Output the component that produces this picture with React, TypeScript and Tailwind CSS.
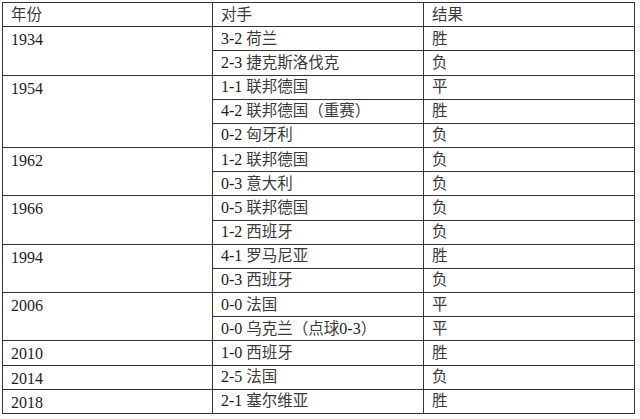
import React from 'react'

interface Match {
  score: string
  opponent: string
  result: string
}

interface YearGroup {
  year: string
  matches: Match[]
}

const groups: YearGroup[] = [
  {
    year: '1934',
    matches: [
      { score: '3-2', opponent: '荷兰', result: '胜' },
      { score: '2-3', opponent: '捷克斯洛伐克', result: '负' },
    ],
  },
  {
    year: '1954',
    matches: [
      { score: '1-1', opponent: '联邦德国', result: '平' },
      { score: '4-2', opponent: '联邦德国（重赛）', result: '胜' },
      { score: '0-2', opponent: '匈牙利', result: '负' },
    ],
  },
  {
    year: '1962',
    matches: [
      { score: '1-2', opponent: '联邦德国', result: '负' },
      { score: '0-3', opponent: '意大利', result: '负' },
    ],
  },
  {
    year: '1966',
    matches: [
      { score: '0-5', opponent: '联邦德国', result: '负' },
      { score: '1-2', opponent: '西班牙', result: '负' },
    ],
  },
  {
    year: '1994',
    matches: [
      { score: '4-1', opponent: '罗马尼亚', result: '胜' },
      { score: '0-3', opponent: '西班牙', result: '负' },
    ],
  },
  {
    year: '2006',
    matches: [
      { score: '0-0', opponent: '法国', result: '平' },
      { score: '0-0', opponent: '乌克兰（点球0-3）', result: '平' },
    ],
  },
  { year: '2010', matches: [{ score: '1-0', opponent: '西班牙', result: '胜' }] },
  { year: '2014', matches: [{ score: '2-5', opponent: '法国', result: '负' }] },
  { year: '2018', matches: [{ score: '2-1', opponent: '塞尔维亚', result: '胜' }] },
]

const cell = 'border border-[#353535] px-[8px] align-middle text-left font-normal leading-none'

function Cjk({ children }: { children: React.ReactNode }) {
  return <span className="text-[#3a3a3a] text-[15.5px]">{children}</span>
}

// digits stay in the serif face, the rest goes to the CJK span
function Mixed({ text }: { text: string }) {
  const parts = text.split(/([0-9-]+)/).filter(Boolean)
  return (
    <>
      {parts.map((p, i) =>
        /^[0-9-]+$/.test(p) ? <span key={i}>{p}</span> : <Cjk key={i}>{p}</Cjk>
      )}
    </>
  )
}

export default function App() {
  return (
    <div className="w-[640px] h-[419px] bg-white pt-[2px] pl-[2px]">
      <table
        className="w-[632px] table-fixed border-collapse text-[16px] text-[#1c1c1c]"
        style={{ fontFamily: '"Liberation Serif", "Noto Sans CJK SC", serif' }}
      >
        <colgroup>
          <col className="w-[210px]" />
          <col className="w-[211px]" />
          <col className="w-[211px]" />
        </colgroup>
        <thead>
          <tr className="h-[24.18px]">
            <th className={cell}><Cjk>年份</Cjk></th>
            <th className={cell}><Cjk>对手</Cjk></th>
            <th className={cell}><Cjk>结果</Cjk></th>
          </tr>
        </thead>
        <tbody>
          {groups.map((g) =>
            g.matches.map((m, i) => (
              <tr key={g.year + i} className="h-[24.18px]">
                {i === 0 && (
                  <td className={cell + ' !align-top pt-[5px]'} rowSpan={g.matches.length}>
                    {g.year}
                  </td>
                )}
                <td className={cell}>
                  {m.score} <Mixed text={m.opponent} />
                </td>
                <td className={cell}>
                  <Cjk>{m.result}</Cjk>
                </td>
              </tr>
            ))
          )}
        </tbody>
      </table>
    </div>
  )
}
